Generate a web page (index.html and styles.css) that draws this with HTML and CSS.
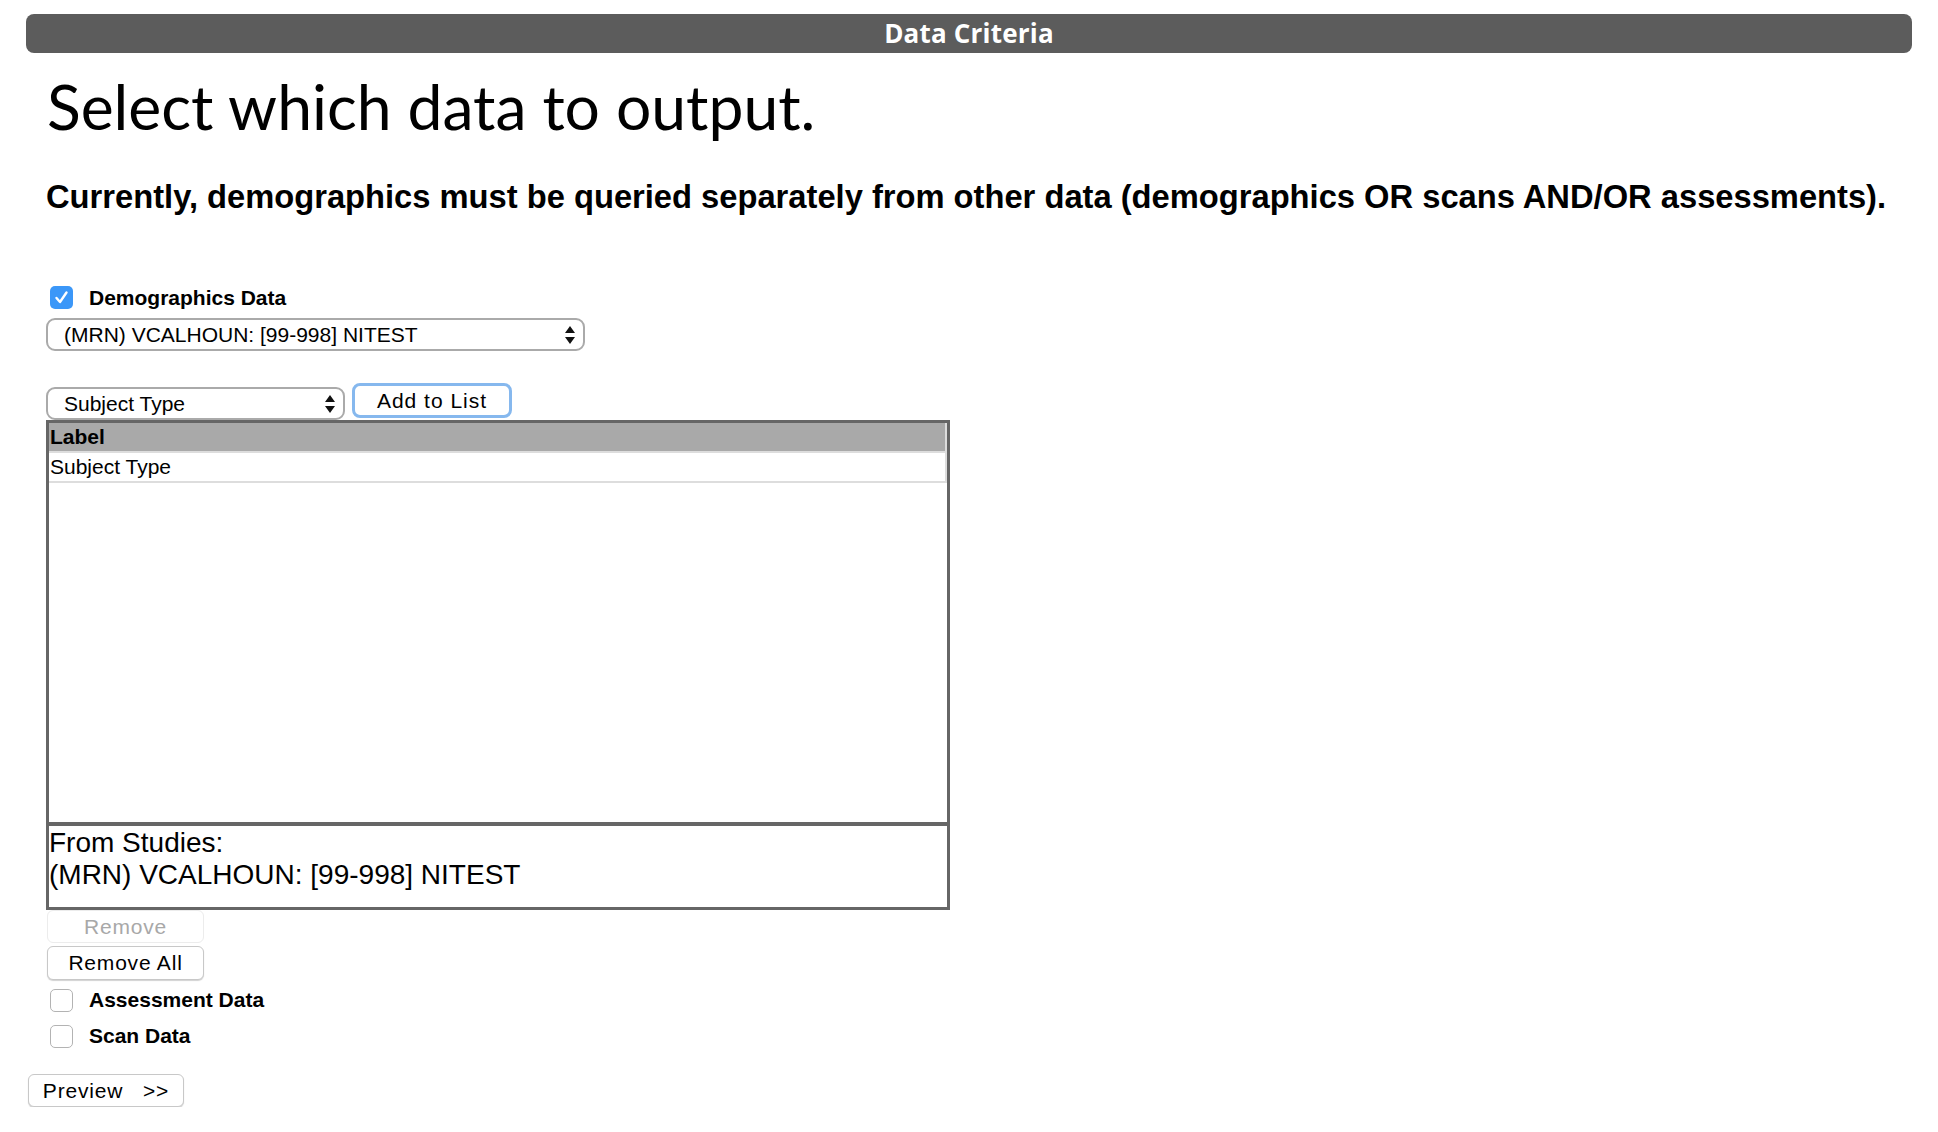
FILE: index.html
```html
<!DOCTYPE html>
<html lang="en">
<head>
<meta charset="utf-8">
<title>Data Criteria</title>
<link rel="stylesheet" href="styles.css">
</head>
<body>
<div class="header">Data Criteria</div>
<div class="content">
  <h1 class="title">Select which data to output.</h1>
  <h2 class="subtitle">Currently, demographics must be queried separately from other data (demographics OR scans AND/OR assessments).</h2>

  <div class="check-row first">
    <span class="checkbox checked">
      <svg viewBox="0 0 23 23" width="23" height="23"><path d="M6.5 12 L10 16 L16.5 6.5" fill="none" stroke="#fff" stroke-width="2.4" stroke-linecap="round" stroke-linejoin="round"/></svg>
    </span>
    <span class="check-label">Demographics Data</span>
  </div>

  <div class="select select-study">
    <span class="select-text">(MRN) VCALHOUN: [99-998] NITEST</span>
    <svg class="arrows" viewBox="0 0 10 18" width="10" height="18"><path d="M5 0 L10 7 L0 7 Z M0 11 L10 11 L5 18 Z" fill="#111"/></svg>
  </div>

  <div class="add-row">
    <div class="select select-field">
      <span class="select-text">Subject Type</span>
      <svg class="arrows" viewBox="0 0 10 18" width="10" height="18"><path d="M5 0 L10 7 L0 7 Z M0 11 L10 11 L5 18 Z" fill="#111"/></svg>
    </div>
    <button class="btn btn-focus">Add to List</button>
  </div>

  <div class="list-box">
    <table class="list-table">
      <thead><tr><th>Label</th></tr></thead>
      <tbody><tr><td>Subject Type</td></tr></tbody>
    </table>
  </div>
  <div class="studies-box">From Studies:<br>(MRN) VCALHOUN: [99-998] NITEST</div>

  <button class="btn btn-remove btn-disabled">Remove</button>
  <button class="btn btn-remove btn-remove-all">Remove All</button>

  <div class="check-row assess">
    <span class="checkbox"></span>
    <span class="check-label">Assessment Data</span>
  </div>
  <div class="check-row scan">
    <span class="checkbox"></span>
    <span class="check-label">Scan Data</span>
  </div>
</div>
<div class="footer">
  <button class="btn btn-preview">Preview&nbsp;&nbsp;&nbsp;&gt;&gt;</button>
</div>
</body>
</html>
```
FILE: styles.css
```css
html, body {
  margin: 0;
  padding: 0;
  background: #fff;
}
body {
  font-family: "Liberation Sans", Arial, sans-serif;
  color: #000;
}
.header {
  margin: 14px 26px 0 26px;
  height: 39px;
  line-height: 39px;
  background: #5c5c5c;
  border-radius: 8px;
  color: #fff;
  text-align: center;
  font-family: "Open Sans", sans-serif;
  font-weight: 700;
  font-size: 26px;
  letter-spacing: 0.2px;
}
.content {
  padding-left: 46px;
}
.title {
  margin: 14px 0 0 1px;
  font-family: Lato, sans-serif;
  font-weight: 400;
  font-size: 62.4px;
  line-height: 77px;
}
.subtitle {
  margin: 34px 0 0 0;
  font-weight: 700;
  font-size: 32.7px;
  line-height: 38px;
}
.check-row {
  display: flex;
  align-items: center;
  height: 24px;
  padding-left: 4px;
}
.check-row.first { margin-top: 70px; height: 23px; }
.check-row.assess { margin-top: 8px; }
.check-row.scan { margin-top: 12px; }
.checkbox {
  box-sizing: border-box;
  width: 23px;
  height: 23px;
  border: 1px solid #b3b3b3;
  border-radius: 5px;
  background: #fff;
  display: flex;
}
.checkbox.checked {
  border: none;
  background: #3b97f8;
}
.check-label {
  margin-left: 16px;
  font-weight: 700;
  font-size: 21px;
}
.select {
  box-sizing: border-box;
  display: flex;
  align-items: center;
  justify-content: space-between;
  height: 33px;
  border: 2px solid #aaa;
  border-radius: 9px;
  background: #fff;
  padding: 0 8px 0 16px;
  font-size: 21px;
}
.select-study {
  margin-top: 9px;
  width: 539px;
}
.add-row {
  margin-top: 32px;
  display: flex;
  align-items: flex-start;
}
.select-field {
  margin-top: 4px;
  width: 299px;
}
.btn {
  box-sizing: border-box;
  display: block;
  font-family: "Liberation Sans", Arial, sans-serif;
  font-size: 21px;
  letter-spacing: 1px;
  color: #000;
  background: #fff;
  border: 1px solid #c8c8c8;
  border-radius: 6px;
  box-shadow: 0 1px 1px rgba(0,0,0,0.18);
  padding: 0;
  text-align: center;
}
.btn-focus {
  margin-left: 7px;
  width: 160px;
  height: 35px;
  border: 3px solid #86b8ee;
  border-radius: 8px;
  box-shadow: none;
}
.list-box {
  box-sizing: border-box;
  width: 904px;
  height: 404px;
  border: 3px solid #666;
  border-bottom-width: 2px;
}
.list-table {
  width: 100%;
  border-collapse: collapse;
  border-right: 2px solid #ddd;
  font-size: 21px;
}
.list-table th, .list-table td {
  text-align: left;
  height: 28px;
  line-height: 28px;
  padding: 0 0 0 1px;
  border-bottom: 2px solid #ddd;
}
.list-table th {
  background: #a9a9a9;
  font-weight: 700;
}
.studies-box {
  box-sizing: border-box;
  width: 904px;
  border: 3px solid #666;
  border-top-width: 2px;
  padding: 1px 0 16px 0;
  font-size: 28px;
  line-height: 32px;
}
.btn-remove {
  width: 157px;
  margin-left: 1px;
  letter-spacing: 0.8px;
}
.btn-disabled {
  margin-top: 0;
  height: 33px;
  color: #a8a8a8;
  border-color: #ececec;
  box-shadow: none;
}
.btn-remove-all {
  margin-top: 3px;
  height: 34px;
}
.footer {
  padding-left: 28px;
  margin-top: 26px;
}
.btn-preview {
  width: 156px;
  height: 33px;
  letter-spacing: 0.8px;
}
```
